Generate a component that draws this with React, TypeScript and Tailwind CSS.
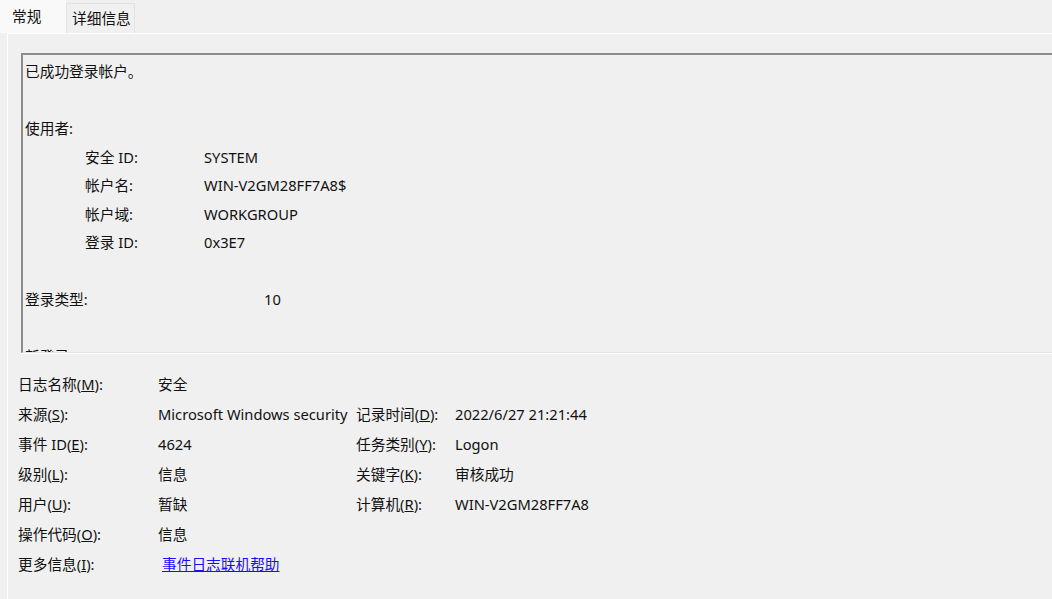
import type { ReactNode } from "react";

const font = "font-['Noto_Sans','Noto_Sans_CJK_SC',sans-serif]";

function Acc({ label, k }: { label: string; k: string }) {
  return (
    <span>
      {label}(<span className="underline">{k}</span>):
    </span>
  );
}

function Line({ children }: { children?: ReactNode }) {
  return <div className="h-[28.5px] leading-[28.5px] whitespace-nowrap">{children}</div>;
}

function Sub({ label, value }: { label: string; value: string }) {
  return (
    <Line>
      <span className="inline-block w-[60px]" />
      <span className="inline-block w-[119px]">{label}</span>
      <span>{value}</span>
    </Line>
  );
}

export default function App() {
  return (
    <div className={`w-[1052px] h-[599px] bg-[#f0f0f0] overflow-hidden flex flex-col text-[14.7px] text-[#111] ${font}`}>
      {/* tabs */}
      <div className="h-[33px] flex items-end shrink-0">
        <div className="w-[66px] h-[33px] bg-[#f9f9f9] pl-[12px] pt-[4px] leading-[24px]">常规</div>
        <div className="w-[69px] h-[30px] border border-b-0 border-[#e3e3e3] pl-[5px] leading-[28px]">详细信息</div>
      </div>

      {/* panel */}
      <div className="flex-1 ml-[7px] border-l border-t border-white flex flex-col">
        <div className="pl-[13px] pt-[19px]">
          <div className="h-[300px] border-t-2 border-l-2 border-t-[#8c8c8c] border-l-[#8c8c8c] border-b border-b-[#e3e3e3] overflow-hidden pl-[2px] pt-[2px]">
            <Line>已成功登录帐户。</Line>
            <Line />
            <Line>使用者:</Line>
            <Sub label="安全 ID:" value="SYSTEM" />
            <Sub label="帐户名:" value="WIN-V2GM28FF7A8$" />
            <Sub label="帐户域:" value="WORKGROUP" />
            <Sub label="登录 ID:" value="0x3E7" />
            <Line />
            <Line>
              <span className="inline-block w-[239px]">登录类型:</span>
              <span>10</span>
            </Line>
            <Line />
            <Line>新登录:</Line>
          </div>
          <div className="h-px bg-white -ml-[1px]" />
        </div>

        <div className="pl-[10px] pt-[15px] grid grid-cols-[140px_198px_99px_1fr] auto-rows-[30px] leading-[30px] whitespace-nowrap">
          <Acc label="日志名称" k="M" />
          <span>安全</span>
          <span />
          <span />

          <Acc label="来源" k="S" />
          <span>Microsoft Windows security</span>
          <Acc label="记录时间" k="D" />
          <span>2022/6/27 21:21:44</span>

          <Acc label="事件 ID" k="E" />
          <span>4624</span>
          <Acc label="任务类别" k="Y" />
          <span>Logon</span>

          <Acc label="级别" k="L" />
          <span>信息</span>
          <Acc label="关键字" k="K" />
          <span>审核成功</span>

          <Acc label="用户" k="U" />
          <span>暂缺</span>
          <Acc label="计算机" k="R" />
          <span>WIN-V2GM28FF7A8</span>

          <Acc label="操作代码" k="O" />
          <span>信息</span>
          <span />
          <span />

          <Acc label="更多信息" k="I" />
          <span className="pl-[4px]">
            <span className="text-[#1a0dff] underline">事件日志联机帮助</span>
          </span>
          <span />
          <span />
        </div>
      </div>
    </div>
  );
}
